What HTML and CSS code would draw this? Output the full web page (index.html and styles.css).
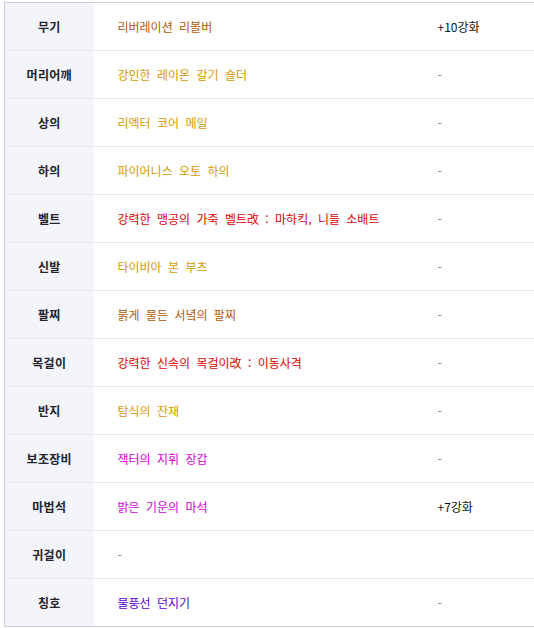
FILE: index.html
```html
<!DOCTYPE html>
<html lang="ko">
<head>
  <meta charset="UTF-8" />
  <meta name="viewport" content="width=device-width, initial-scale=1.0"/>
  <title>장비 정보</title>
  <link rel="stylesheet" href="styles.css">
</head>
<body>
  <table class="equip-table">
    <colgroup>
      <col class="col-slot">
      <col class="col-item">
      <col class="col-enhance">
    </colgroup>
    <tbody>
      <tr>
        <th>무기</th>
        <td class="item rare-brown">리버레이션 리볼버</td>
        <td class="enhance">+10강화</td>
      </tr>
      <tr>
        <th>머리어깨</th>
        <td class="item rare-gold">강인한 레이온 갈기 숄더</td>
        <td class="enhance empty">-</td>
      </tr>
      <tr>
        <th>상의</th>
        <td class="item rare-gold">리엑터 코어 메일</td>
        <td class="enhance empty">-</td>
      </tr>
      <tr>
        <th>하의</th>
        <td class="item rare-gold">파이어니스 오토 하의</td>
        <td class="enhance empty">-</td>
      </tr>
      <tr>
        <th>벨트</th>
        <td class="item rare-red">강력한 맹공의 가죽 벨트改 : 마하킥, 니들 소배트</td>
        <td class="enhance empty">-</td>
      </tr>
      <tr>
        <th>신발</th>
        <td class="item rare-gold">타이비아 본 부츠</td>
        <td class="enhance empty">-</td>
      </tr>
      <tr>
        <th>팔찌</th>
        <td class="item rare-brown">붉게 물든 서녘의 팔찌</td>
        <td class="enhance empty">-</td>
      </tr>
      <tr>
        <th>목걸이</th>
        <td class="item rare-red">강력한 신속의 목걸이改 : 이동사격</td>
        <td class="enhance empty">-</td>
      </tr>
      <tr>
        <th>반지</th>
        <td class="item rare-gold">탐식의 잔재</td>
        <td class="enhance empty">-</td>
      </tr>
      <tr>
        <th>보조장비</th>
        <td class="item rare-pink">잭터의 지휘 장갑</td>
        <td class="enhance empty">-</td>
      </tr>
      <tr>
        <th>마법석</th>
        <td class="item rare-pink">밝은 기운의 마석</td>
        <td class="enhance">+7강화</td>
      </tr>
      <tr>
        <th>귀걸이</th>
        <td class="item empty">-</td>
        <td class="enhance"></td>
      </tr>
      <tr>
        <th>칭호</th>
        <td class="item rare-purple">물풍선 던지기</td>
        <td class="enhance empty">-</td>
      </tr>
    </tbody>
  </table>
</body>
</html>
```

FILE: styles.css
```css
* { margin: 0; padding: 0; box-sizing: border-box; }

body {
  font-family: "Noto Sans CJK KR", "Noto Sans", sans-serif;
  font-size: 12px;
  color: #111;
  background: #fff;
  padding: 2px 0 0 4px;
}

.equip-table {
  width: 530px;
  border-collapse: collapse;
  table-layout: fixed;
  border: 1px solid #cbccd8;
}

.col-slot { width: 89px; }
.col-item { width: 320px; }
.col-enhance { width: 121px; }

.equip-table tr { height: 48px; }
.equip-table tr + tr th,
.equip-table tr + tr td { border-top: 1px solid #e6e7ec; }

.equip-table th {
  background-color: #f4f5fa;
  color: #22222e;
  font-weight: bold;
  font-size: 12px;
  letter-spacing: 0.3px;
  text-align: center;
}

.equip-table td {
  text-align: left;
  padding-left: 24px;
  word-spacing: 3px;
  white-space: nowrap;
}

.enhance { color: #111; }
.empty { color: #777; }

.rare-brown { color: #b05a05; }
.rare-gold { color: #d39a00; }
.rare-red { color: #e00000; }
.rare-pink { color: #d400d4; }
.rare-purple { color: #5a00d0; }
```
